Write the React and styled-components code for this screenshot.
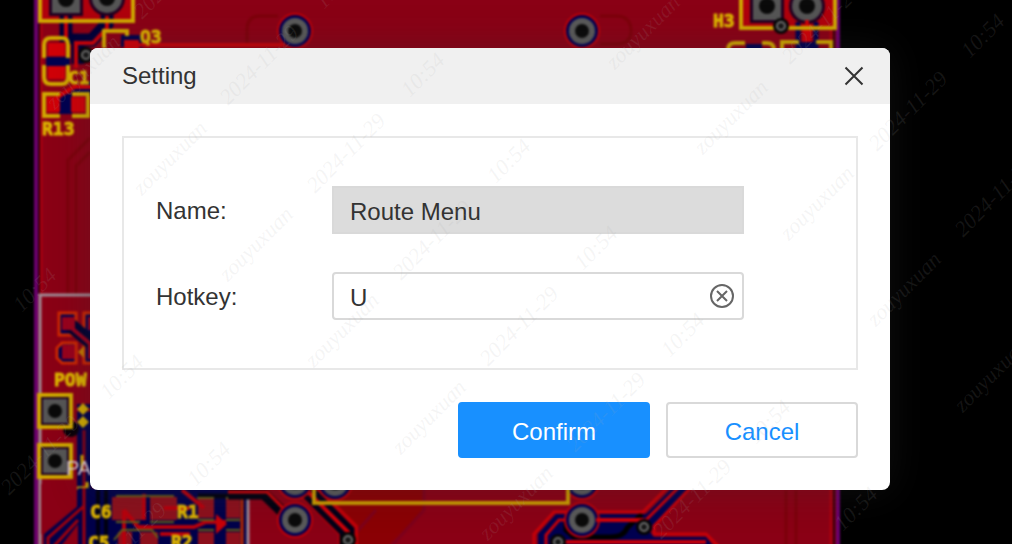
import React, { useState } from "react";
import styled, { createGlobalStyle } from "styled-components";

const stamps = {
  zouyuxuan: [[83, 72], [170, 158], [256, 244], [342, 330], [429, 417], [516, 503], [643, 32], [731, 117], [817, 203], [904, 289], [991, 375]],
  "2024-11-29": [[173, -21], [259, 65], [346, 153], [432, 240], [519, 326], [606, 412], [692, 499], [821, 24], [908, 111], [994, 197], [40, 455], [127, 542]],
  "10:54": [[337, -13], [423, 75], [509, 161], [596, 248], [683, 335], [769, 422], [856, 509], [35, 290], [122, 377], [209, 464], [983, 36]],
};

function Via({ x, y, small }) {
  if (small) {
    return (
      <g>
        <circle cx={x} cy={y} r="8" fill="#050505" />
        <circle cx={x} cy={y} r="4" fill="#181818" stroke="#707070" strokeWidth="2" />
      </g>
    );
  }
  return (
    <g>
      <circle cx={x} cy={y} r="17" fill="#000052" stroke="#c00008" strokeWidth="2" />
      <circle cx={x} cy={y} r="13" fill="#5a5a5a" />
      <circle cx={x} cy={y} r="7" fill="#0a0a0a" />
    </g>
  );
}

function SquarePad({ x, y, size, hole }) {
  return (
    <g>
      <rect x={x - size / 2 - 3} y={y - size / 2 - 3} width={size + 6} height={size + 6} fill="#200020" />
      <rect x={x - size / 2} y={y - size / 2} width={size} height={size} fill="#555" />
      <circle cx={x} cy={y} r={hole} fill="#0a0a0a" />
    </g>
  );
}

function Board() {
  return (
    <Canvas viewBox="0 0 1012 544" preserveAspectRatio="xMinYMin slice" aria-hidden="true">
      <rect width="1012" height="544" fill="#000" />
      <Layers>
        <rect x="36" y="-5" width="802" height="560" fill="#8a0015" stroke="#6a006c" strokeWidth="4" />
        <path d="M41 24V294M831 30V550" stroke="#a80010" strokeWidth="3" fill="none" />
        <path d="M39 0V294M834 30V550" stroke="#30000c" strokeWidth="2" fill="none" />
        <g fill="none" stroke="#7c000a" strokeWidth="3">
          <path d="M68 190V160L90 138M76 190V166L90 152M68 190V294M76 190V294M786 490V550M796 490V550" />
          <path d="M278 16H260Q247 16 247 30V44M600 16H616Q631 16 631 31Q631 44 616 44H600" />
        </g>

        {/* left header and its traces */}
        <rect x="42" y="-4" width="90" height="24" fill="#b0000c" />
        <path d="M66 10V44M107 10V24L92 40H78V64" fill="none" stroke="#000038" strokeWidth="13" />
        <path d="M66 10V38M107 10V28L93 43H76V68" fill="none" stroke="#c80008" strokeWidth="4" />
        <SquarePad x={66} y={-1} size={28} hole={8} />
        <circle cx="107" cy="-2" r="18" fill="#200020" />
        <circle cx="107" cy="-2" r="15" fill="#555" />
        <circle cx="107" cy="-2" r="8" fill="#0a0a0a" />
        <rect x="40" y="-8" width="93" height="29" fill="none" stroke="#d0a800" strokeWidth="4" />
        <rect x="46" y="42" width="22" height="38" fill="#8a0015" />
        <rect x="46" y="57" width="24" height="9" fill="#000050" />
        <path d="M48 43H65V56H48ZM48 66H65V79H48Z" fill="#d00008" />
        <path d="M44 58V45Q44 38 51 38H62Q68 38 68 45V58M44 65V77Q44 84 51 84H62Q68 84 68 77V65" fill="none" stroke="#d0a800" strokeWidth="4" />
        <path d="M70 92L92 80V96H76Z" fill="#000050" />
        <rect x="59" y="94" width="13" height="20" fill="#000050" />
        <path d="M56 98L74 87H92" fill="none" stroke="#d00008" strokeWidth="4" />
        <path d="M47 97H60V112H47ZM71 97H85V112H71Z" fill="#d00008" />
        <path d="M60 94H44V116H60M72 94H88V116H72" fill="none" stroke="#d0a800" strokeWidth="4" />
        <Via x={86} y={55} small />
        <path d="M124 47V38H140V48" fill="none" stroke="#00004a" strokeWidth="6" />
        <path d="M104 48V31H127V36" fill="none" stroke="#d0a800" strokeWidth="4" />
        <rect x="124" y="40" width="15" height="10" fill="#d00008" />
        <path d="M139 45H282L292 38" fill="none" stroke="#c80008" strokeWidth="4" />
        <Via x={295} y={31} />
        <Via x={582} y={31} />

        {/* right header */}
        <rect x="742" y="-4" width="92" height="31" fill="#b0000c" />
        <path d="M798 22V50M816 22V50" stroke="#000050" strokeWidth="5" />
        <path d="M807 20V50" stroke="#d00008" strokeWidth="9" />
        <SquarePad x={767} y={6} size={28} hole={8} />
        <circle cx="807" cy="6" r="18" fill="#200020" />
        <circle cx="807" cy="6" r="15" fill="#555" />
        <circle cx="807" cy="6" r="8" fill="#0a0a0a" />
        <path d="M807 20V27" stroke="#d00008" strokeWidth="4" />
        <path d="M741 -4V28H835V-4" fill="none" stroke="#d0a800" strokeWidth="4" />
        <Via x={781} y={26} small />
        <path d="M746 44H762V50H746ZM798 42H818V50H798Z" fill="#000050" />
        <path d="M728 50Q728 43 735 43H745M762 43H767Q774 43 774 50M782 50V42H799M816 42H831V50" fill="none" stroke="#d0a800" strokeWidth="4" />

        {/* power connector */}
        <path d="M40 550V295H92" fill="none" stroke="#a08c96" strokeWidth="3" />
        <path d="M76 313H59V335H76ZM94 313H84V335H94ZM76 343H62L57 348V358L62 363H76ZM94 343H84V363H94Z" fill="#000050" stroke="#d02800" strokeWidth="3" />
        <path d="M68 323L94 345" stroke="#000030" strokeWidth="14" />
        <path d="M62 317H75V330H62ZM62 345H75V359H62ZM88 317H94V330H88ZM88 345H94V359H88Z" fill="#98001c" />
        <path d="M68 325L94 347" stroke="#98001c" strokeWidth="4" />
        <path d="M78 352L84 346V358Z" fill="#c07800" />
        <rect x="77" y="404" width="15" height="146" fill="#00004a" />
        <path d="M72 410H92M84 430V550" stroke="#8a0015" strokeWidth="3" />
        <circle cx="71" cy="429" r="8" fill="#080008" />
        <SquarePad x={55} y={411} size={24} hole={7} />
        <SquarePad x={55} y={461} size={24} hole={7} />
        <path d="M39 395H71V427H39ZM39 445H71V477H39Z" fill="none" stroke="#d0a800" strokeWidth="4" />
        <path d="M83 403L89 409L83 415L77 409ZM83 416L89 422L83 428L77 422Z" fill="#d0a800" />
        <path d="M82 455V470M76 488H87V482" fill="none" stroke="#d0a800" strokeWidth="3" />

        {/* bottom left parts */}
        <path d="M78 488H248V550H44V534L78 506Z" fill="#00004a" />
        <path d="M78 524V550H58ZM41 484H77V502L44 534H41Z" fill="#8a0015" />
        <path d="M84 506L48 538V550M84 488V550M78 520L54 546" fill="none" stroke="#a0000c" strokeWidth="3" />
        <path d="M98 490V550M106 490V550" stroke="#000010" strokeWidth="4" />
        <path d="M198 496H248" stroke="#000010" strokeWidth="5" />
        <path d="M112 497H142V520H112ZM150 497H177V520H150ZM198 499H214V518H198ZM226 499H240V518H226ZM118 532H132V550H118ZM140 532H158V550H140ZM198 532H214V550H198ZM226 532H240V550H226Z" fill="#8c101c" />
        <path d="M144 494V520M124 510L138 527H194L206 522H226M182 490L204 508M160 534H190M124 510V550M164 508H190" fill="none" stroke="#b8000c" strokeWidth="4" />
        <path d="M216 514L227 524L216 534Z" fill="#c80008" />
        <path d="M242 496V550" stroke="#b82800" strokeWidth="3" />
        <path d="M116 496H174M116 522H140M150 522H174M197 498H214M226 498H241M198 520H214M226 520H240M198 530H214M226 530H240M114 540L122 530H152L158 538" fill="none" stroke="#656018" strokeWidth="2" />
        <path d="M248 488V550" stroke="#a08c96" strokeWidth="3" />

        {/* bottom vias and routes */}
        <path d="M340 484H424V510L384 550H352V530L316 500Z" fill="#8a0004" />
        <path d="M346 544L376 510M424 484V510L388 550" fill="none" stroke="#7c001c" strokeWidth="3" />
        <path d="M228 494H264L290 519" fill="none" stroke="#000010" strokeWidth="11" />
        <path d="M228 492H267L292 517" fill="none" stroke="#d00008" strokeWidth="3" />
        <path d="M302 484L348 530V550" fill="none" stroke="#c00008" strokeWidth="20" />
        <path d="M300 484L347 531V550" fill="none" stroke="#000018" strokeWidth="15" />
        <path d="M302 486L349 533" fill="none" stroke="#d00008" strokeWidth="4" />
        <Via x={295} y={482} />
        <Via x={335} y={483} />
        <Via x={582} y={482} />
        <path d="M314 484V503H568V484" fill="none" stroke="#c79a00" strokeWidth="4" />
        <path d="M538 550V534L556 514H646L672 488H692L650 532L654 537H706L716 550Z" fill="#000050" />
        <path d="M566 520V530L574 537H610Q624 537 627 528L642 514" fill="none" stroke="#000" strokeWidth="5" />
        <path d="M534 550V534L554 512H643L669 486M692 486L654 526V534H706L720 548M546 550V535L559 520H646L680 486" fill="none" stroke="#c80008" strokeWidth="3" />
        <path d="M550 542H706" stroke="#c80008" strokeWidth="4" />
        <Via x={295} y={520} />
        <Via x={582} y={520} />
        <path d="M596 520H644" stroke="#d00008" strokeWidth="4" />
        <Via x={348} y={540} small />
        <Via x={558} y={542} small />
        <Via x={644} y={527} small />

        <Silk>
          <text x="140" y="43">Q3</text>
          <text x="68" y="84">C1</text>
          <text x="42" y="135">R13</text>
          <text x="713" y="27">H3</text>
          <text x="54" y="386">POW</text>
          <text x="90" y="518">C6</text>
          <text x="177" y="518">R1</text>
          <text x="88" y="549">C5</text>
          <text x="171" y="548">R2</text>
        </Silk>
        <PadName x="66" y="475">PA</PadName>
      </Layers>
    </Canvas>
  );
}

function Watermark() {
  return (
    <Overlay viewBox="0 0 1012 544" preserveAspectRatio="xMinYMin slice" aria-hidden="true">
      {Object.entries(stamps).map(([label, points]) =>
        points.map(([x, y]) => (
          <text key={`${label}-${x}`} transform={`translate(${x} ${y}) rotate(-45)`} y="7">
            {label}
          </text>
        ))
      )}
    </Overlay>
  );
}

function App() {
  const [hotkey, setHotkey] = useState("U");

  return (
    <Page>
      <GlobalStyle />
      <Board />
      <Dialog role="dialog" aria-labelledby="dialog-title">
        <Header>
          <Title id="dialog-title">Setting</Title>
          <CloseButton type="button" aria-label="Close">
            <svg width="20" height="20" viewBox="0 0 20 20">
              <path d="M1.5 1.5L18.5 18.5M18.5 1.5L1.5 18.5" />
            </svg>
          </CloseButton>
        </Header>
        <Form onSubmit={(e) => e.preventDefault()}>
          <Panel>
            <Label htmlFor="name">Name:</Label>
            <Field $disabled>
              <Input id="name" value="Route Menu" disabled readOnly />
            </Field>
            <Label htmlFor="hotkey">Hotkey:</Label>
            <Field>
              <Input
                id="hotkey"
                value={hotkey}
                onChange={(e) => setHotkey(e.target.value)}
              />
              <ClearButton type="button" aria-label="Clear hotkey" onClick={() => setHotkey("")}>
                <svg width="24" height="24" viewBox="0 0 24 24">
                  <circle cx="12" cy="12" r="11" />
                  <path d="M7 7L17 17M17 7L7 17" />
                </svg>
              </ClearButton>
            </Field>
          </Panel>
          <Actions>
            <Button type="submit" $primary>Confirm</Button>
            <Button type="button">Cancel</Button>
          </Actions>
        </Form>
      </Dialog>
      <Watermark />
    </Page>
  );
}

const GlobalStyle = createGlobalStyle`
  * {
    box-sizing: border-box;
  }

  body {
    margin: 0;
    background: #000;
    color: #333;
    font-family: "Liberation Sans", Arial, sans-serif;
    font-size: 24px;
  }

  button, input {
    font: inherit;
    color: inherit;
  }
`;

const Page = styled.main`
  position: relative;
  min-height: 100vh;
  padding: 48px 122px 54px 90px;
  overflow: hidden;
`;

const Canvas = styled.svg`
  position: absolute;
  inset: 0;
  width: 100%;
  height: 100%;
`;

const Layers = styled.g`
  filter: blur(1px);
`;

const Overlay = styled(Canvas)`
  pointer-events: none;
  fill: rgba(170, 170, 170, 0.12);
  font-family: "Liberation Serif", serif;
  font-size: 22px;
  font-style: italic;
  text-anchor: middle;
`;

const Silk = styled.g`
  fill: #dcb200;
  stroke: #dcb200;
  stroke-width: 1;
  font-family: "DejaVu Sans Mono", monospace;
  font-size: 18px;
  font-weight: bold;
`;

const PadName = styled.text`
  fill: #dccbd6;
  font-size: 20px;
`;

const Dialog = styled.section`
  position: relative;
  background: #fff;
  border-radius: 8px;
  overflow: hidden;
  box-shadow: 0 0 40px rgba(50, 50, 50, 0.3);
`;

const Header = styled.header`
  display: flex;
  align-items: center;
  justify-content: space-between;
  height: 56px;
  padding: 0 24px 0 32px;
  background: #f0f0f0;
`;

const Title = styled.h1`
  margin: 0;
  font-size: 24px;
  font-weight: normal;
`;

const CloseButton = styled.button`
  display: flex;
  padding: 2px;
  border: 0;
  background: none;
  cursor: pointer;

  svg {
    fill: none;
    stroke: #333;
    stroke-width: 2;
  }
`;

const Form = styled.form`
  padding: 32px;
`;

const Panel = styled.div`
  display: grid;
  grid-template-columns: 176px 1fr;
  row-gap: 38px;
  align-items: center;
  padding: 48px 112px 48px 32px;
  border: 2px solid #e8e8e8;
`;

const Label = styled.label`
  padding-top: 2px;
  line-height: 28px;
`;

const Field = styled.div`
  display: flex;
  align-items: center;
  height: 48px;
  padding: 0 8px 0 16px;
  border: 2px solid #d9d9d9;
  border-radius: ${(props) => (props.$disabled ? "0" : "4px")};
  background: ${(props) => (props.$disabled ? "#dcdcdc" : "#fff")};
`;

const Input = styled.input`
  flex: 1;
  min-width: 0;
  height: 100%;
  padding: 4px 0 0;
  border: 0;
  outline: 0;
  background: transparent;
`;

const ClearButton = styled.button`
  display: flex;
  padding: 0;
  border: 0;
  background: none;
  cursor: pointer;

  svg {
    fill: none;
    stroke: #666;
    stroke-width: 2;
  }
`;

const Actions = styled.div`
  display: flex;
  justify-content: flex-end;
  gap: 16px;
  margin-top: 32px;
`;

const Button = styled.button`
  width: 192px;
  height: 56px;
  padding: 4px 0 0;
  border: 2px solid ${(props) => (props.$primary ? "#1890ff" : "#d9d9d9")};
  border-radius: 4px;
  background: ${(props) => (props.$primary ? "#1890ff" : "#fff")};
  color: ${(props) => (props.$primary ? "#fff" : "#1890ff")};
  cursor: pointer;
`;

export default App;
